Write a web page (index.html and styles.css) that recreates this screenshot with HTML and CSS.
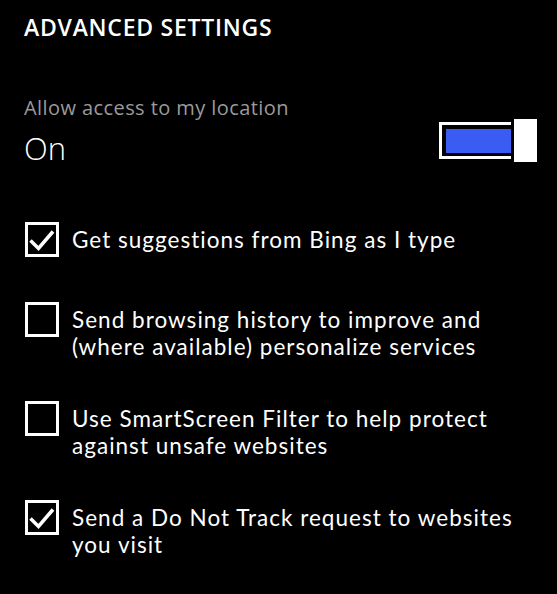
FILE: index.html
```html
<!DOCTYPE html>
<html>
<head>
<meta charset="utf-8">
<link rel="stylesheet" href="styles.css">
</head>
<body>
<div class="page">
  <h1 class="title">ADVANCED SETTINGS</h1>
  <div class="location">
    <div class="loc-label">Allow access to my location</div>
    <div class="loc-row">
      <div class="loc-value">On</div>
      <div class="toggle">
        <div class="track"><div class="fill"></div></div>
        <div class="thumb"></div>
      </div>
    </div>
  </div>
  <ul class="options">
    <li class="option">
      <span class="box"><svg class="check" viewBox="0 0 28 29"><path d="M2.5 15.5 L10.5 23.5 L25 6.5" /></svg></span>
      <span class="text">Get suggestions from Bing as I type</span>
    </li>
    <li class="option">
      <span class="box"></span>
      <span class="text">Send browsing history to improve and<br>(where available) personalize services</span>
    </li>
    <li class="option">
      <span class="box"></span>
      <span class="text">Use SmartScreen Filter to help protect<br>against unsafe websites</span>
    </li>
    <li class="option">
      <span class="box"><svg class="check" viewBox="0 0 28 29"><path d="M2.5 15.5 L10.5 23.5 L25 6.5" /></svg></span>
      <span class="text">Send a Do Not Track request to websites<br>you visit</span>
    </li>
  </ul>
</div>
</body>
</html>
```

FILE: styles.css
```css
html, body {
  margin: 0;
  padding: 0;
  background: #000;
}
body {
  font-family: "Open Sans", "Noto Sans", sans-serif;
  color: #fff;
  width: 557px;
  height: 594px;
  overflow: hidden;
}
.page {
  padding: 12px 0 0 24px;
}
.title {
  margin: 0;
  font-size: 23px;
  font-weight: 600;
  line-height: 30px;
  letter-spacing: 0.75px;
}
.location {
  margin-top: 54px;
}
.loc-label {
  color: #9a9a9a;
  font-size: 20px;
  line-height: 24px;
  letter-spacing: 0.42px;
}
.loc-row {
  display: flex;
  align-items: flex-start;
  justify-content: space-between;
  padding-right: 20px;
  margin-top: 8px;
}
.loc-value {
  font-size: 31px;
  line-height: 40px;
  font-weight: 300;
}
.toggle {
  display: flex;
  align-items: center;
  margin-top: -9px;
}
.track {
  border: 3px solid #fff;
  border-right: none;
  padding: 4px 0 3px 4px;
  height: 24px;
  width: 65px;
}
.fill {
  width: 100%;
  height: 100%;
  background: #3a5cf2;
}
.thumb {
  width: 23px;
  height: 43px;
  background: #fff;
  margin-left: 3px;
}
.options {
  list-style: none;
  margin: 54px 0 0 0;
  padding: 0 0 0 1px;
  display: flex;
  flex-direction: column;
  gap: 41px;
}
.option {
  display: flex;
  align-items: flex-start;
  gap: 13px;
  min-height: 39px;
}
.box {
  flex: none;
  width: 28px;
  height: 29px;
  border: 3px solid #fff;
  display: block;
}
.check {
  display: block;
  width: 28px;
  height: 29px;
  fill: none;
  stroke: #fff;
  stroke-width: 3.5;
}
.text {
  font-family: "Lato", "Open Sans", sans-serif;
  font-size: 22.5px;
  line-height: 27px;
  padding-top: 4px;
  letter-spacing: 1.02px;
  white-space: nowrap;
}
```
